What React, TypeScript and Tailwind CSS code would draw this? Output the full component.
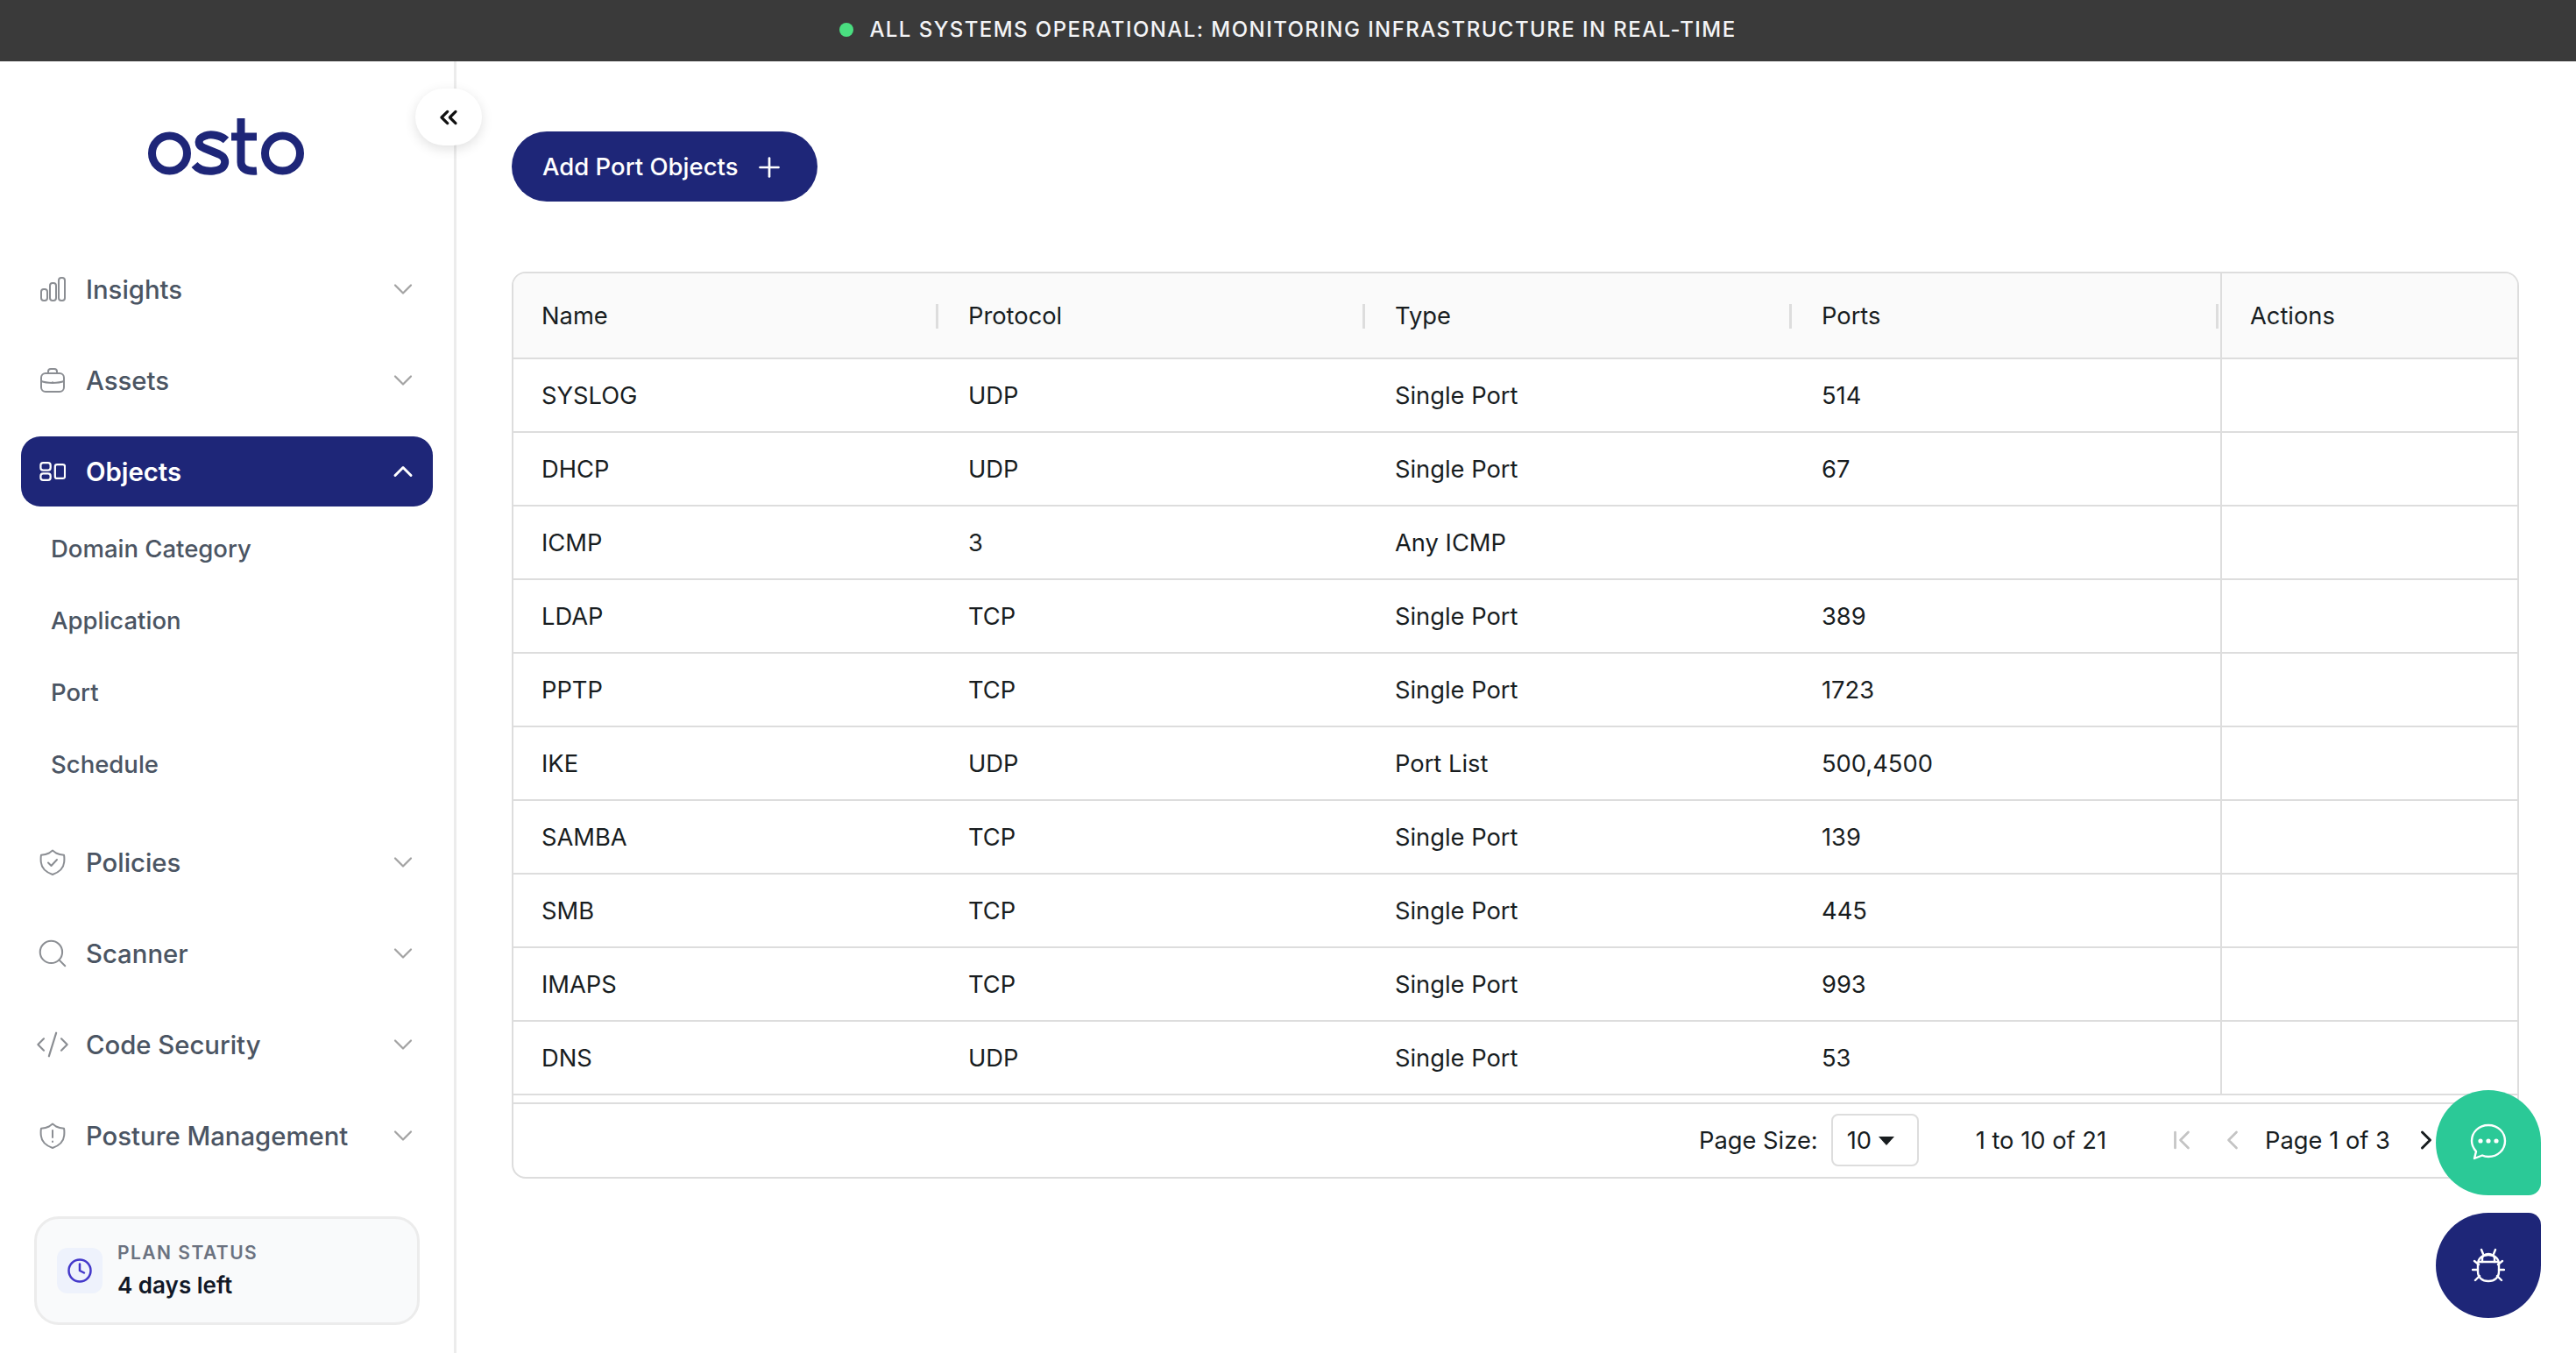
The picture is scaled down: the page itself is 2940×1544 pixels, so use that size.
import { ChevronDown, ChevronUp, ChevronsLeft, ChevronLeft, ChevronRight, ChevronFirst, Plus, Search, CodeXml, Clock } from 'lucide-react';
import type { ReactNode } from 'react';

const rows = [
  ['SYSLOG', 'UDP', 'Single Port', '514'],
  ['DHCP', 'UDP', 'Single Port', '67'],
  ['ICMP', '3', 'Any ICMP', ''],
  ['LDAP', 'TCP', 'Single Port', '389'],
  ['PPTP', 'TCP', 'Single Port', '1723'],
  ['IKE', 'UDP', 'Port List', '500,4500'],
  ['SAMBA', 'TCP', 'Single Port', '139'],
  ['SMB', 'TCP', 'Single Port', '445'],
  ['IMAPS', 'TCP', 'Single Port', '993'],
  ['DNS', 'UDP', 'Single Port', '53'],
];

const headers = ['Name', 'Protocol', 'Type', 'Ports'];

function InsightsIcon() {
  return (
    <svg width="30" height="28" viewBox="0 0 30 28" fill="none" stroke="currentColor" strokeWidth="2">
      <rect x="2" y="14" width="7" height="13" rx="3" />
      <rect x="12" y="7" width="7" height="20" rx="3" />
      <rect x="22" y="1" width="7" height="26" rx="3" />
    </svg>
  );
}

function AssetsIcon() {
  return (
    <svg width="30" height="28" viewBox="0 0 30 28" fill="none" stroke="currentColor" strokeWidth="2">
      <rect x="2" y="6" width="26" height="21" rx="5" />
      <path d="M10 6V4a3 3 0 0 1 3-3h4a3 3 0 0 1 3 3v2" />
      <path d="M2 15c6 2.5 20 2.5 26 0" />
      <path d="M15 15.5v.5" />
    </svg>
  );
}

function ObjectsIcon() {
  return (
    <svg width="32" height="24" viewBox="0 0 32 24" fill="none" stroke="currentColor" strokeWidth="2.4">
      <rect x="1.5" y="1.5" width="12" height="9" rx="3" />
      <rect x="1.5" y="14.5" width="12" height="8" rx="3" />
      <rect x="19" y="3.5" width="12" height="17" rx="2.5" />
    </svg>
  );
}

function ShieldIcon({ children }: { children: ReactNode }) {
  return (
    <svg width="30" height="30" viewBox="0 0 30 30" fill="none" stroke="currentColor" strokeWidth="2" strokeLinecap="round" strokeLinejoin="round">
      <path d="M15 1.5 19 4.5c2.500 1.300 5.500 2 9 2.200.5 2 .5 5 .2 8.300C27.500 22 22 26.500 15 29 8 26.500 2.500 22 1.800 15 1.500 11.700 1.500 8.700 2 6.700c3.500-.2 6.500-.9 9-2.200z" />
      {children}
    </svg>
  );
}

function BugIcon() {
  return (
    <svg width="38" height="40" viewBox="0 0 38 40" fill="none" stroke="white" strokeWidth="2.4" strokeLinecap="round" strokeLinejoin="round">
      <path d="M7 19c0-7 5-11 12-11s12 4 12 11v8c0 7-5 11-12 11S7 34 7 27z" />
      <path d="M12 16V12c0-3 3-5 7-5s7 2 7 5v4" />
      <path d="M8 16h22" />
      <path d="M13 7 11 2M25 7l2-5" />
      <path d="M7 25H1M31 25h6M8 19l-5-4M30 19l5-4M9 32l-5 5M29 32l5 5" />
    </svg>
  );
}

function ChatIcon() {
  return (
    <svg width="42" height="44" viewBox="0 0 42 44" fill="none" stroke="white" strokeWidth="2.4" strokeLinecap="round" strokeLinejoin="round">
      <path d="M21 2c11 0 19 8 19 18s-8 18-19 18c-3 0-5-.5-7-1.500L5 40l2-8c-3-3.500-5-7.500-5-12C2 10 10 2 21 2z" />
      <circle cx="12" cy="20" r="1.400" fill="white" />
      <circle cx="21" cy="20" r="1.400" fill="white" />
      <circle cx="30" cy="20" r="1.400" fill="white" />
    </svg>
  );
}

function NavItem({ icon, label }: { icon: ReactNode; label: string }) {
  return (
    <div className="flex h-20 items-center pl-[21px] pr-4">
      <span className="flex w-[30px] shrink-0 justify-center text-[#8b8e93]">{icon}</span>
      <span className="ml-[23px] flex-1 pt-[1px] text-[29.300px] font-medium text-[#4b5563]">{label}</span>
      <ChevronDown size={36} strokeWidth={1.5} className="text-[#a3a3a3]" />
    </div>
  );
}

export default function App() {
  return (
    <div className="flex h-[1544px] flex-col overflow-hidden bg-white [font-family:Inter,sans-serif]">
      <div className="flex h-[70px] shrink-0 items-center justify-center bg-[#3a3a3a] pb-[3px]">
        <span className="h-4 w-4 rounded-full bg-[#4ade80]" />
        <span className="ml-[18px] text-[24px] font-medium tracking-[0.06em] text-[#f3f4f6]">
          ALL SYSTEMS OPERATIONAL: MONITORING INFRASTRUCTURE IN REAL-TIME
        </span>
      </div>

      <div className="flex min-h-0 flex-1">
        <aside className="relative w-[521px] shrink-0 border-r-[3px] border-[#ececec] pl-6 pr-6">
          <button className="absolute left-[474px] top-[31px] flex h-[65px] w-[76px] items-center justify-center rounded-full bg-white shadow-[0_4px_14px_rgba(0,0,0,0.12)]">
            <ChevronsLeft size={32} strokeWidth={2.4} className="text-[#111111]" />
          </button>

          <div className="flex h-[220px] items-start justify-center pr-[2px] pt-[65px]">
            <svg width="178" height="65" viewBox="0 0 178 65" fill="none" stroke="#1e2678" strokeWidth="9">
              <circle cx="24.500" cy="40" r="20" />
              <path d="M89 25C84 20 72 17 65 20 56 23 56 31 64 34L81 41C92 46 89 59 75 60 66 61 58 59 53 53" />
              <path d="M106 0V50C106 57 112 61 124 60" />
              <path d="M95 21H124" />
              <circle cx="153.500" cy="40" r="20" />
            </svg>
          </div>

          <nav className="flex flex-col">
            <NavItem icon={<InsightsIcon />} label="Insights" />
            <div className="mt-6">
              <NavItem icon={<AssetsIcon />} label="Assets" />
            </div>
            <div className="mt-6 flex h-20 items-center rounded-[22px] bg-[#1e2678] pl-[21px] pr-4 text-white">
              <span className="flex w-[30px] shrink-0 justify-center"><ObjectsIcon /></span>
              <span className="ml-[23px] flex-1 pt-[1px] text-[29.300px] font-semibold">Objects</span>
              <ChevronUp size={36} strokeWidth={2} />
            </div>
            <div className="mt-2 flex flex-col">
              {['Domain Category', 'Application', 'Port', 'Schedule'].map((item) => (
                <div key={item} className="flex h-[82px] items-center pl-[34px] text-[27.500px] font-medium text-[#4b5563]">
                  {item}
                </div>
              ))}
            </div>
            <div className="mt-[30px] flex flex-col gap-6">
              <NavItem
                icon={
                  <ShieldIcon>
                    <path d="m10 15.500 3.500 3.500 6.500-7" />
                  </ShieldIcon>
                }
                label="Policies"
              />
              <NavItem icon={<Search size={38} strokeWidth={1.3} className="shrink-0" />} label="Scanner" />
              <NavItem icon={<CodeXml size={40} strokeWidth={1.3} className="shrink-0" />} label="Code Security" />
              <NavItem
                icon={
                  <ShieldIcon>
                    <path d="M15 9v8" />
                    <path d="M15 21.500v.5" />
                  </ShieldIcon>
                }
                label="Posture Management"
              />
            </div>
            <div className="mx-[15px] mt-[52px] flex h-[124px] items-center rounded-[28px] border-[3px] border-[#ececec] bg-[#f9fafb] pl-[23px]">
              <span className="flex h-[52px] w-[52px] items-center justify-center rounded-xl bg-[#eef2fc]">
                <Clock size={30} strokeWidth={2} className="text-[#4338ca]" />
              </span>
              <div className="ml-[17px] flex flex-col">
                <span className="text-[21px] font-semibold leading-[30px] tracking-[0.07em] text-[#6b7280]">PLAN STATUS</span>
                <span className="mt-[4px] text-[26px] font-semibold leading-[36px] text-[#111827]">4 days left</span>
              </div>
            </div>
          </nav>
        </aside>

        <main className="min-w-0 flex-1 pl-[63px] pr-[65px] pt-20 text-[#181d1f]">
          <button className="flex h-20 w-[349px] items-center rounded-[40px] bg-[#1e2678] pl-[35px] pt-[1px] text-[27.500px] font-medium text-white">
            Add Port Objects
            <Plus size={36} strokeWidth={1.8} className="ml-[18px]" />
          </button>

          <div className="mt-20 h-[1035px] overflow-hidden rounded-[16px] border-2 border-[#dddddd] text-[27.300px]">
            <div className="flex h-[98px] items-center border-b-2 border-[#dddddd] bg-[#fafafa]">
              {headers.map((h) => (
                <div key={h} className="relative flex h-full w-[487px] items-center pl-8 pt-[2px]">
                  {h}
                  <span className="absolute right-[2px] top-[35px] h-[28px] w-[3px] bg-[#dddddd]" />
                </div>
              ))}
              <div className="flex h-full flex-1 items-center border-l-2 border-[#dddddd] pl-8 pt-[2px]">Actions</div>
            </div>

            {rows.map((row) => (
              <div key={row[0]} className="flex h-[84px] items-center border-b-2 border-[#dddddd]">
                {row.map((cell, i) => (
                  <div key={i} className="w-[487px] pl-8 pt-[3px]">{cell}</div>
                ))}
                <div className="h-full flex-1 border-l-2 border-[#dddddd]" />
              </div>
            ))}

            <div className="mt-[8px] flex h-[84px] items-center border-t-2 border-[#dddddd]">
              <span className="ml-[1353px] pt-[2px]">Page Size:</span>
              <span className="ml-[15px] flex h-[60px] w-[100px] items-center gap-2 rounded-[8px] border-2 border-[#dddddd] pl-4 pt-[2px]">
                10
                <span className="h-0 w-0 border-x-[9px] border-t-[10px] border-x-transparent border-t-[#181d1f]" />
              </span>
              <span className="ml-[65px] pt-[2px]">1 to 10 of 21</span>
              <ChevronFirst size={36} strokeWidth={1.8} className="ml-[68px] shrink-0 text-[#c4c4c4]" />
              <ChevronLeft size={36} strokeWidth={1.8} className="ml-[22px] shrink-0 text-[#c4c4c4]" />
              <span className="ml-[19px] pt-[2px]">Page 1 of 3</span>
              <ChevronRight size={36} strokeWidth={2} className="ml-[23px] shrink-0 text-[#181d1f]" />
            </div>
          </div>
        </main>
      </div>

      <button className="fixed left-[2780px] top-[1244px] flex h-[120px] w-[120px] items-center justify-center rounded-[60px_60px_14px_60px] bg-[#2bc997]">
        <ChatIcon />
      </button>
      <button className="fixed left-[2780px] top-[1384px] flex h-[120px] w-[120px] items-center justify-center rounded-[60px_14px_60px_60px] bg-[#1e2678]">
        <BugIcon />
      </button>
    </div>
  );
}
